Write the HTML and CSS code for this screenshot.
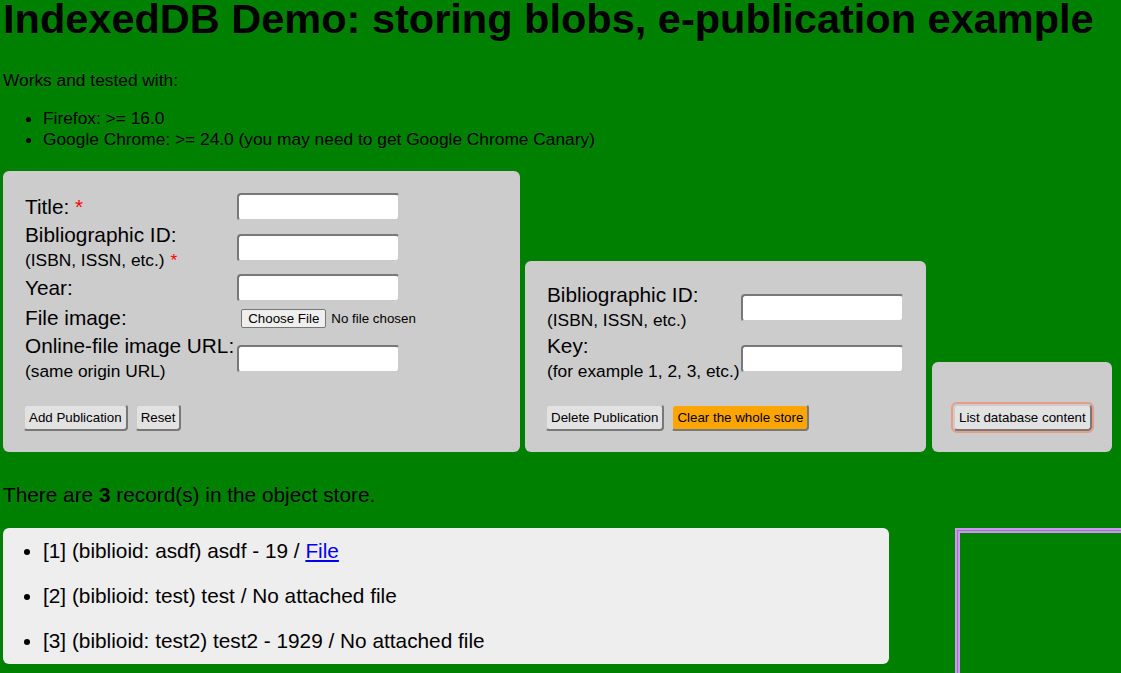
FILE: index.html
```html
<!DOCTYPE html>
<html lang="en">
<head>
<meta charset="utf-8">
<title>IndexedDB Demo: storing blobs, e-publication example</title>
<link rel="stylesheet" href="styles.css">
</head>
<body>
<h1 class="title">IndexedDB Demo: storing blobs, e-publication example</h1>
<p class="intro">Works and tested with:</p>
<ul class="compat">
  <li>Firefox: &gt;= 16.0</li>
  <li>Google Chrome: &gt;= 24.0 (you may need to get Google Chrome Canary)</li>
</ul>

<div class="forms">
  <form class="panel panel-add">
    <table class="fields">
      <tr>
        <td class="label-cell"><span class="label">Title:</span> <span class="req">*</span></td>
        <td class="input-cell"><span class="textbox"></span></td>
      </tr>
      <tr>
        <td class="label-cell"><span class="label">Bibliographic ID:</span><br><span class="note">(ISBN, ISSN, etc.)</span> <span class="req req-small">*</span></td>
        <td class="input-cell"><span class="textbox"></span></td>
      </tr>
      <tr>
        <td class="label-cell"><span class="label">Year:</span></td>
        <td class="input-cell"><span class="textbox"></span></td>
      </tr>
      <tr>
        <td class="label-cell"><span class="label">File image:</span></td>
        <td class="input-cell"><span class="filebox"><span class="file-btn">Choose File</span><span class="file-text">No file chosen</span></span></td>
      </tr>
      <tr>
        <td class="label-cell"><span class="label">Online-file image URL:</span><br><span class="note">(same origin URL)</span></td>
        <td class="input-cell"><span class="textbox"></span></td>
      </tr>
    </table>
    <div class="button-pane">
      <span class="btn">Add Publication</span>
      <span class="btn">Reset</span>
    </div>
  </form>

  <form class="panel panel-delete">
    <table class="fields">
      <tr>
        <td class="label-cell label-tight"><span class="label">Bibliographic ID:</span><br><span class="note">(ISBN, ISSN, etc.)</span></td>
        <td class="input-cell"><span class="textbox"></span></td>
      </tr>
      <tr>
        <td class="label-cell label-tight"><span class="label">Key:</span><br><span class="note">(for example 1, 2, 3, etc.)</span></td>
        <td class="input-cell"><span class="textbox"></span></td>
      </tr>
    </table>
    <div class="button-pane">
      <span class="btn">Delete Publication</span>
      <span class="btn btn-destroy">Clear the whole store</span>
    </div>
  </form>

  <form class="panel panel-search">
    <div class="button-pane">
      <span class="btn btn-focus">List database content</span>
    </div>
  </form>
</div>

<p class="count">There are <strong>3</strong> record(s) in the object store.</p>

<div class="results">
  <ul class="pub-list">
    <li>[1] (biblioid: asdf) asdf - 19 / <a href="#" class="file-link">File</a></li>
    <li>[2] (biblioid: test) test / No attached file</li>
    <li>[3] (biblioid: test2) test2 - 1929 / No attached file</li>
  </ul>
  <div class="pub-viewer"><div class="viewer-frame"></div></div>
</div>
</body>
</html>
```

FILE: styles.css
```css
html, body {
  overflow: hidden;
}

body {
  margin: 0;
  padding: 0 3px;
  background: #008000;
  color: #000;
  font-family: "Liberation Sans", Arial, sans-serif;
  font-size: 17.33px;
}

.title {
  margin: 0;
  font-size: 41.5px;
  line-height: 38px;
  font-weight: bold;
  white-space: nowrap;
}

.intro {
  margin: 32px 0 0;
}

.compat {
  margin: 17px 0 0;
  padding-left: 40px;
}

.compat li {
  line-height: 21px;
}

.forms {
  display: flex;
  align-items: flex-end;
  margin-top: 21px;
}

.panel {
  background: #cccccc;
  border-radius: 6px;
  padding: 21px 20px 21px;
  box-sizing: border-box;
}

.panel-add {
  width: 517px;
}

.panel-delete {
  width: 401px;
  margin-left: 5px;
}

.panel-search {
  width: 180px;
  margin-left: 6px;
  padding-top: 20px;
}

.fields {
  border-collapse: separate;
  border-spacing: 0;
}

.fields td {
  padding: 1px 2px;
  vertical-align: middle;
}

.fields td.input-cell {
  padding-left: 1px;
}

.fields td.label-tight {
  padding-right: 0;
}

.label-cell {
  white-space: nowrap;
  font-size: 20.8px;
  line-height: 24px;
}

.note {
  font-size: 17.33px;
}

.req {
  color: red;
}

.req-small {
  font-size: 17.33px;
}

.textbox {
  display: block;
  width: 163px;
  height: 28px;
  box-sizing: border-box;
  background: #fff;
  border-width: 2px;
  border-style: inset;
  border-color: #cccccc;
  border-radius: 4px;
}

.filebox {
  display: flex;
  align-items: center;
  height: 28px;
  padding: 0 4px;
  font-size: 13.33px;
  white-space: nowrap;
}

.file-btn {
  display: inline-block;
  padding: 1px 6px;
  line-height: 15px;
  border: 1px solid #767676;
  border-radius: 2px;
  background: #efefef;
}

.file-text {
  margin-left: 5px;
}

.button-pane {
  display: flex;
  gap: 7px;
  margin-top: 20px;
}

.btn {
  display: inline-block;
  font-size: 13.33px;
  line-height: 15px;
  padding: 4px;
  border-width: 2px;
  border-style: outset;
  border-color: #cccccc;
  border-radius: 4px;
  background: #e2e2e2;
  white-space: nowrap;
}

.btn-destroy {
  background: #ffa500;
}

.btn-focus {
  outline: 2px solid #e59d88;
}

.panel-search .button-pane {
  margin-top: 22px;
  padding-left: 1px;
}

.count {
  margin: 31px 0 0;
  font-size: 20.8px;
}

.results {
  display: flex;
  align-items: flex-start;
  margin-top: 21px;
}

.pub-list {
  width: 886px;
  flex: none;
  margin: 0;
  padding: 0 0 0 40px;
  box-sizing: border-box;
  background: #eeeeee;
  border-radius: 6px;
  font-size: 20.8px;
}

.pub-list li {
  padding: 10.7px 10.4px 10.7px 0;
}

.file-link {
  color: #0000ee;
}

.pub-viewer {
  flex: none;
  width: 500px;
  height: 340px;
  margin-left: 66px;
  border: 2px solid #d092ff;
}

.viewer-frame {
  width: 100%;
  height: 100%;
  box-shadow: inset 1px 1px 0 #8a8a8a, inset 3px 3px 0 #d092ff;
}
```
